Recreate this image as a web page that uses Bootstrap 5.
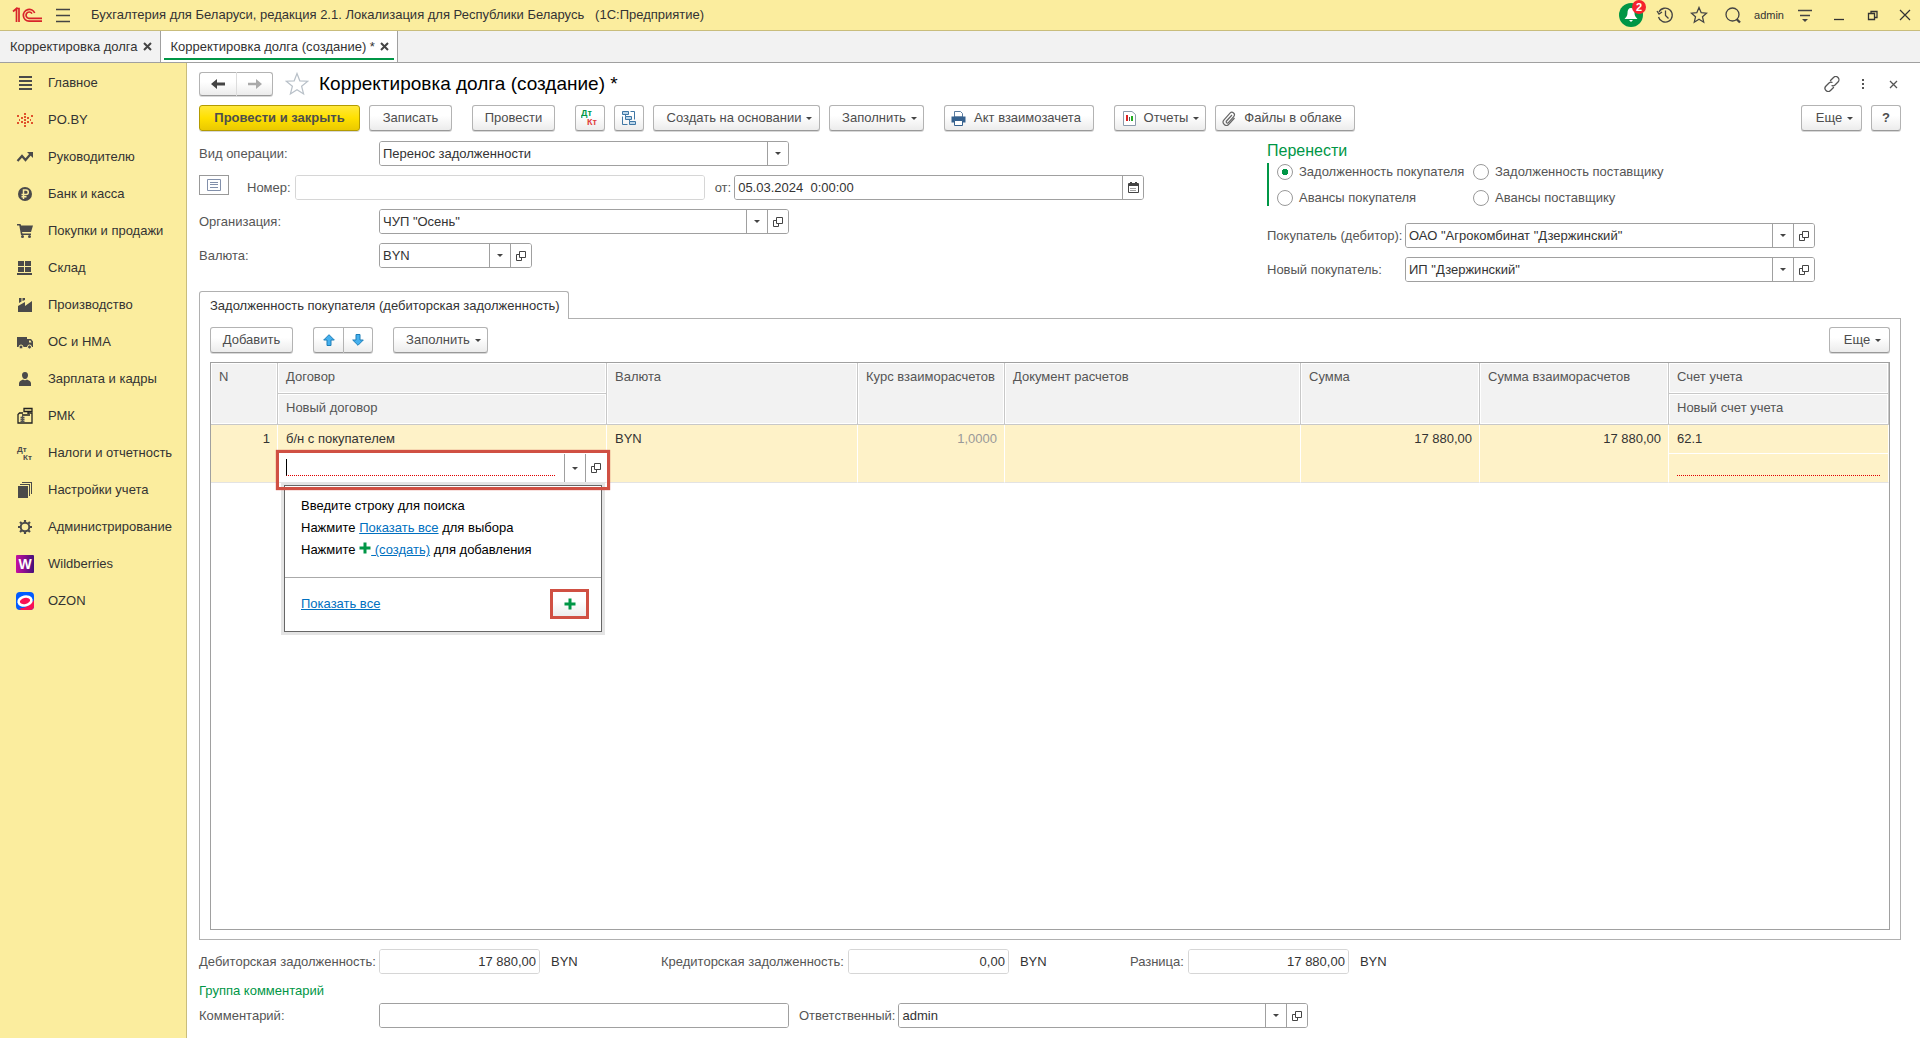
<!DOCTYPE html>
<html lang="ru">
<head>
<meta charset="utf-8">
<meta name="viewport" content="width=device-width, initial-scale=1">
<title>Корректировка долга (создание)</title>
<link href="https://cdn.jsdelivr.net/npm/bootstrap@5.3.0/dist/css/bootstrap.min.css" rel="stylesheet">
<style>
:root{--ink:#4d4d4d;--line:#a0a0a0;--soft:#d6d6d6;--brand:#fbed9e;--green:#009646;--red:#d05043}
body{font:13px/16px "Liberation Sans",Arial,sans-serif;color:#333;background:#fff;min-height:100vh}
svg{display:block;flex:none}
a{color:#0070c0}
.topbar{background:var(--brand);height:31px;border-bottom:1px solid #c9bd7c;padding-left:12px}
.icon-btn{border:0;background:none;padding:0;color:#4a4a4a;display:flex;align-items:center;justify-content:center}
.top-tools .icon-btn{width:34px}
.top-tools .icon-btn:last-child{width:30px}
.top-tools .bell{position:relative;width:24px;height:24px;margin:0 5px;border-radius:50%;background:var(--green)}
.bell-count{position:absolute;top:-3px;right:-3px;width:14px;height:14px;border-radius:50%;background:#f5222d;color:#fff;font-size:11px;line-height:14px;font-weight:bold}
.user-name{font-size:11px;padding:0 4px}
.tabstrip{background:#f2f2f2;height:32px;border-bottom:1px solid var(--line)}
.doc-tab{padding:0 8px 0 10px;gap:5px;border-right:1px solid var(--line);color:#333}
.doc-tab.current{background:#fff;position:relative}
.doc-tab.current::after{content:"";position:absolute;left:3px;right:3px;bottom:2px;height:2px;background:var(--green)}
.doc-tab a{color:inherit;text-decoration:none}
.sidebar{width:187px;flex:none;background:var(--brand);border-right:1px solid #c9bd7c;padding-top:1px}
.side-link{display:flex;align-items:center;height:37px;gap:14px;padding-left:16px;color:#333;text-decoration:none}
.page{padding:9px 19px 10px 12px;min-width:0}
.page-title{font-size:19px;line-height:24px;color:#000;margin:0;font-weight:normal}
.star-btn{margin:0 10px 0 12px}
.tool{display:inline-flex;align-items:center;justify-content:center;height:26px;border:1px solid #b3b3b3;border-bottom-color:#999;border-radius:3px;background:linear-gradient(#fff 40%,#ececec);color:var(--ink);box-shadow:0 1px 0 #d8d8d8;padding:0;font-size:13px;line-height:16px;white-space:nowrap;flex:none}
.tool.main{background:linear-gradient(#ffe83b,#ffe000 50%,#eac900);border-color:#b39b00;font-weight:bold;width:161px}
.w-sq{width:30px}.w-s{width:83px}.w-more{width:61px;padding-left:6px}.w-fill{width:95px;padding-left:6px}
.w-base{width:167px;padding-left:6px}.w-act{width:150px;padding-right:6px}.w-rep{width:92px;padding-left:2px}.w-file{width:140px;padding-right:6px}
.tool .caret{margin-left:5px}
.tool .pic{margin-right:8px}
.caret{width:0;height:0;border:3px solid transparent;border-top:3px solid #444;border-bottom:0}
.pair{display:inline-flex}
.pair .tool:first-child{border-radius:3px 0 0 3px;border-right:0}
.pair .tool:last-child{border-radius:0 3px 3px 0}
.pair .tool{width:30px}
.pair.history .tool{width:37px;height:24px}
.pair.history .tool:last-child{border-left-color:#ddd}
.tools-row{gap:9px}
.ms-g{margin-left:11px}
.top-row{margin-top:9px}
.form-area{display:grid;grid-template-columns:minmax(0,1068fr) minmax(0,634fr);margin-top:10px}
.cap{color:#555;white-space:nowrap}
.cap-a{width:180px}.cap-b{width:138px}
.cap-num{padding:0 4px 0 18px}
.cap-mid{padding:0 3px 0 10px}
.line-row{display:flex;align-items:center;height:25px}
.lines{display:flex;flex-direction:column;gap:9px}
.field{width:410px;height:25px;flex:none;flex-wrap:nowrap;border:1px solid var(--line);border-radius:3px;background:#fff;overflow:hidden}
.field .form-control,.field .form-select{border:0;border-radius:0;padding:0 3px;font-size:13px;line-height:16px;min-height:0;height:23px;color:#333;background-color:#fff;box-shadow:none}
.field .form-select{background-image:linear-gradient(var(--line),var(--line)),url("data:image/svg+xml,%3Csvg xmlns='http://www.w3.org/2000/svg' width='6' height='3'%3E%3Cpath d='M0 0h6L3 3z' fill='%23444'/%3E%3C/svg%3E");background-repeat:no-repeat;background-size:1px 23px,6px 3px;background-position:right 20px top,right 7px center}
.field .end{width:21px;margin-left:0!important;border:0;border-left:1px solid var(--line);background:#fff;padding:0;display:flex;align-items:center;justify-content:center;color:#444;flex:none}
.field.small-f{width:153px}
.field.sum{width:161px}
.field.mute{border-color:var(--soft)}
.field.sum input{text-align:right}
.note-btn{width:30px;height:20px;border:1px solid #999;background:#fff;padding:0;display:flex;align-items:center;justify-content:center;align-self:flex-start}
.move-title{font-size:16px;line-height:20px;color:var(--green);margin:0}
.radio-box{border-left:2px solid var(--green);display:grid;grid-template-columns:196px max-content;padding-left:8px;height:43px;align-content:space-between;margin:2px 0 17px}
.radio-box .form-check{display:flex;align-items:center;gap:6px;padding:0;margin:0;min-height:0;color:#555;height:17px}
.radio-box .form-check-input{width:16px;height:16px;margin:0;float:none;border-color:#999;box-shadow:none;flex:none}
.radio-box .form-check-input:checked{background-color:#fff;background-image:radial-gradient(circle,var(--green) 0 3px,transparent 3px)}
.panel-wrap{margin-top:9px}
.panel-tab{align-self:flex-start;height:28px;padding:0 8px 0 10px;border:1px solid #b0b0b0;border-bottom:0;border-radius:3px 3px 0 0;background:#fff;margin-bottom:-1px;position:relative;z-index:1;color:#333}
.panel-body{border:1px solid #b0b0b0;padding:8px 10px 9px}
.grid-box{border:1px solid var(--line);margin-top:9px;flex:1 1 auto}
.debts{table-layout:fixed;width:100%;border-collapse:separate;border-spacing:0}
.debts th{font-weight:normal;background:#f2f2f2;color:#555;height:31px;padding:6px 8px;vertical-align:top;border-right:1px solid #c8c8c8;border-bottom:1px solid #c8c8c8;box-shadow:inset 1px 1px #fff,inset -1px -1px #fff;white-space:nowrap}
.debts td{background:#fef2c8;height:29px;padding:6px 8px;vertical-align:top;border-right:1px solid #fff;border-bottom:1px solid #fff;color:#333;white-space:nowrap}
.debts td.text-end{padding-right:7px}
.debts td.dim{color:#999}
.debts .end-line{border-bottom-color:#e3e3e3}
.debts .edit-cell{padding:0;position:relative;background:#fff}
.dots{border-bottom:1px dotted #e00000;height:16px}
.edit-line{height:28px;display:flex}
.edit-line input{border:0;outline:0;flex:1 1 auto;min-width:0;margin:5px 9px 5px 8px;padding:0;height:17px;background:#fff;border-bottom:1px dotted #e00000;border-left:1px solid #000;border-radius:0}
.edit-line button{width:21px;border:0;border-left:1px solid var(--line);background:none;padding:0;display:flex;align-items:center;justify-content:center;color:#444}
.mark-frame{position:absolute;left:-2px;right:-4px;top:-4px;height:40px;border:3px solid var(--red);box-shadow:0 0 1px var(--red);z-index:3;pointer-events:none}
.hint{position:absolute;left:6px;top:31px;width:318px;border:1px solid #666;background:#fff;box-shadow:0 0 0 3px #e4e4e4;z-index:2;color:#000;white-space:nowrap}
.hint-text{padding:9px 16px 15px;line-height:22px;height:91px}
.hint-text svg{display:inline-block;vertical-align:0}
.hint-foot{border-top:1px solid #aaa;height:54px;padding:0 12px 2px 16px}
.plus-btn{width:39px;height:30px;border:3px solid var(--red);background:linear-gradient(#fff 40%,#ececec);padding:0;display:flex;align-items:center;justify-content:center}
.totals{margin-top:9px}
.totals .cur{width:121px;padding-left:11px;flex:none}
.group-cap{color:var(--green);margin:9px 0 4px;line-height:16px;font-size:13px;font-weight:normal}
</style>
</head>
<body class="d-flex flex-column">
<svg width="0" height="0" class="position-absolute" aria-hidden="true">
  <symbol id="open" viewBox="0 0 12 12"><path d="M4.500 1.500h6v6h-6zM4.500 4.500h-3v6h5v-3" fill="none" stroke="currentColor" stroke-width="1"/></symbol>
  <symbol id="plus" viewBox="0 0 12 12"><path d="M4.500 0.500h3v4H11.500v3H7.500V11.500h-3V7.500H.5v-3h4z" fill="#009646"/></symbol>
</svg>

<header class="topbar d-flex align-items-center">
  <svg width="31" height="16" viewBox="0 0 31 16" fill="none" stroke="#d8232a" stroke-width="1.700" aria-label="1С"><path d="M1 4.500L4.500 1.500V15M7 15V1.500H5"/><path d="M22.700 6A5.900 5.900 0 1 0 17 14.200H30M20 6.600A3.200 3.200 0 1 0 17 11.400H30"/></svg>
  <button class="icon-btn ms-2" aria-label="Меню"><svg width="24" height="16" viewBox="0 0 24 16" stroke="#444" stroke-width="1.300"><path d="M5 2.500h14M5 8.500h14M5 14.500h14"/></svg></button>
  <span class="ms-3">Бухгалтерия для Беларуси, редакция 2.1. Локализация для Республики Беларусь &nbsp; (1С:Предприятие)</span>
  <div class="top-tools ms-auto d-flex align-items-center">
    <button class="icon-btn bell" aria-label="Оповещения"><svg width="16" height="16" viewBox="0 0 16 16" fill="#fff"><path d="M8 1c-2.500 0-3.500 2-3.500 5C4.500 9 3 10 1.500 12h13C13 10 11.500 9 11.500 6c0-3-1-5-3.500-5zM6 13h4l-2 2z"/></svg><span class="bell-count">2</span></button>
    <button class="icon-btn" aria-label="История"><svg width="18" height="18" viewBox="0 0 18 18" fill="none" stroke="#444" stroke-width="1.300"><path d="M3 6a7 7 0 1 1-.5 5M9.500 4.500V9.500l3 3"/><path d="M1 5l2 3 3-2"/></svg></button>
    <button class="icon-btn" aria-label="Избранное"><svg width="18" height="18" viewBox="0 0 18 18" fill="none" stroke="#444" stroke-width="1.300"><path d="M9 1.500l2.200 5.200 5.300.5-4 3.600 1.200 5.400L9 13.300l-4.700 2.900 1.200-5.400-4-3.600 5.300-.5z"/></svg></button>
    <button class="icon-btn" aria-label="Поиск"><svg width="18" height="18" viewBox="0 0 18 18" fill="none" stroke="#444" stroke-width="1.300"><circle cx="8.500" cy="8.500" r="6.500"/><path d="M12.500 13l3.500 3.500" stroke-width="2.300"/></svg></button>
    <span class="user-name">admin</span>
    <button class="icon-btn" aria-label="Сервис"><svg width="16" height="16" viewBox="0 0 16 16" stroke="#444" stroke-width="1.300"><path d="M1 3.500h14M3 8.500h10"/><path d="M5 12h6l-3 3z" fill="#444" stroke="none"/></svg></button>
    <button class="icon-btn" aria-label="Свернуть"><svg width="18" height="16" viewBox="0 0 18 16" stroke="#333" stroke-width="1.300"><path d="M4 12.500h10"/></svg></button>
    <button class="icon-btn" aria-label="Восстановить"><svg width="18" height="16" viewBox="0 0 18 16" fill="none" stroke="#333" stroke-width="1.300"><path d="M4.500 6.500h6v6h-6zM7 6V4.500h6v6h-2"/></svg></button>
    <button class="icon-btn" aria-label="Закрыть"><svg width="16" height="16" viewBox="0 0 16 16" stroke="#333" stroke-width="1.200"><path d="M3 3l10 10M13 3L3 13"/></svg></button>
  </div>
</header>

<nav class="tabstrip d-flex align-items-stretch">
  <div class="doc-tab d-flex align-items-center"><a href="#">Корректировка долга</a><button class="icon-btn" aria-label="Закрыть вкладку"><svg width="9" height="9" viewBox="0 0 9 9" stroke="#444" stroke-width="2"><path d="M1 1l7 7M8 1L1 8"/></svg></button></div>
  <div class="doc-tab current d-flex align-items-center"><a href="#">Корректировка долга (создание) *</a><button class="icon-btn" aria-label="Закрыть вкладку"><svg width="9" height="9" viewBox="0 0 9 9" stroke="#444" stroke-width="2"><path d="M1 1l7 7M8 1L1 8"/></svg></button></div>
</nav>

<div class="d-flex flex-grow-1">
<nav class="sidebar">
  <a class="side-link" href="#"><svg width="18" height="18" viewBox="0 0 18 18" fill="#4a4a4a"><path d="M3 2h13v2H3zM3 6h13v2H3zM3 10h13v2H3zM3 14h13v2H3z"/></svg>Главное</a>
  <a class="side-link" href="#"><svg width="18" height="18" viewBox="0 0 18 18" fill="#e0532d"><path d="M8 2h2v2H8zM8 5h2v2H8zM8 8h2v2H8zM8 11h2v2H8zM8 14h2v2H8zM5 6h2v2H5zM11 6h2v2h-2zM5 10h2v2H5zM11 10h2v2h-2zM1 4h2v2H1zM15 4h2v2h-2zM3 8h1v2H3zM14 8h1v2h-1zM1 11h2v2H1zM15 11h2v2h-2z"/></svg>PO.BY</a>
  <a class="side-link" href="#"><svg width="18" height="18" viewBox="0 0 18 18" fill="none" stroke="#4a4a4a" stroke-width="2.200"><path d="M1.500 13l4.500-5 3.500 4L15 5.500"/><path d="M11 4h6v6z" fill="#4a4a4a" stroke="none"/></svg>Руководителю</a>
  <a class="side-link" href="#"><svg width="18" height="18" viewBox="0 0 18 18"><circle cx="9" cy="9" r="7" fill="#4a4a4a"/><path d="M7.500 14V5H10a2.300 2.300 0 0 1 0 4.600H5.500M5.500 11.800h5" fill="none" stroke="#fbed9e" stroke-width="1.500"/></svg>Банк и касса</a>
  <a class="side-link" href="#"><svg width="18" height="18" viewBox="0 0 18 18" fill="#4a4a4a"><path d="M1 2h3.500l.6 1.500H17L15 10H6l.5 1.500H15V13H5L3.300 3.500H1z"/><circle cx="6.500" cy="14.500" r="1.500"/><circle cx="13.500" cy="14.500" r="1.500"/></svg>Покупки и продажи</a>
  <a class="side-link" href="#"><svg width="18" height="18" viewBox="0 0 18 18" fill="#4a4a4a"><path d="M2 2h6v5H2zM9 2h6v5H9zM2 8h6v5H2zM9 8h6v5H9zM1 14h15v2H1z"/></svg>Склад</a>
  <a class="side-link" href="#"><svg width="18" height="18" viewBox="0 0 18 18" fill="#4a4a4a"><path d="M2 16v-6l7-4v4l7-5v11zM3 2h2.500v3.500L3 7zM6.500 2H9v2L6.500 5z"/></svg>Производство</a>
  <a class="side-link" href="#"><svg width="18" height="18" viewBox="0 0 18 18" fill="#4a4a4a"><path d="M1 4h10v10H1zM11 6h4l2 2.500V14h-6z"/><path d="M13 7.500h1.500l1 2H13z" fill="#fbed9e"/><g stroke="#fbed9e"><circle cx="5" cy="14" r="2"/><circle cx="13.500" cy="14" r="2"/></g></svg>ОС и НМА</a>
  <a class="side-link" href="#"><svg width="18" height="18" viewBox="0 0 18 18" fill="#4a4a4a"><path d="M9 2c2.200 0 3 1.500 3 3.200C12 7 11 9 9 9S6 7 6 5.200C6 3.500 6.800 2 9 2zM3 16v-2.500C3 11 5 10.500 7 9.500c1 1 3 1 4 0 2 1 4 1.500 4 4V16z"/></svg>Зарплата и кадры</a>
  <a class="side-link" href="#"><svg width="18" height="18" viewBox="0 0 18 18" fill="none" stroke="#222" stroke-width="1.300"><path d="M7 6H3.500L2 7.500V16h14V6h-4"/><path d="M8 1.500h8v3H8zM12 4.500V7M6 8h8"/><path d="M4.500 10.500h4M4.500 12.500h4M4.500 14.500h4M6.500 9v6" stroke="#555"/></svg>РМК</a>
  <a class="side-link" href="#"><svg width="18" height="18" viewBox="0 0 18 18" fill="#4a4a4a" font-family="Liberation Sans" font-weight="bold" font-size="8"><text x="1" y="8">Дт</text><text x="7" y="16">Кт</text></svg>Налоги и отчетность</a>
  <a class="side-link" href="#"><svg width="18" height="18" viewBox="0 0 18 18" fill="#4a4a4a"><path d="M2 5h10v12H2zM4 3h10v12h-1V4H4zM6 1h10v12h-1V2H6z"/></svg>Настройки учета</a>
  <a class="side-link" href="#"><svg width="18" height="18" viewBox="0 0 18 18" fill="none" stroke="#4a4a4a"><circle cx="9" cy="9" r="4.300" stroke-width="2"/><path d="M9 2v2.500M9 13.500V16M2 9h2.500M13.500 9H16M4 4l1.800 1.800M12.200 12.200L14 14M4 14l1.800-1.800M12.200 5.800L14 4" stroke-width="2.200"/></svg>Администрирование</a>
  <a class="side-link" href="#"><svg width="18" height="18" viewBox="0 0 18 18"><defs><linearGradient id="wb"><stop stop-color="#c70fa0"/><stop offset="1" stop-color="#45107a"/></linearGradient></defs><rect width="18" height="18" rx="1" fill="url(#wb)"/><text x="9" y="14" text-anchor="middle" fill="#fff" font-family="Liberation Sans" font-weight="bold" font-size="14">W</text></svg>Wildberries</a>
  <a class="side-link" href="#"><svg width="18" height="18" viewBox="0 0 18 18"><rect width="18" height="18" rx="4" fill="#005bff"/><path d="M3 16c5 1 10-2 15-8v6a4 4 0 0 1-4 4H5z" fill="#f91155"/><ellipse cx="9" cy="9" rx="6.500" ry="4.300" transform="rotate(-12 9 9)" fill="#f91155" stroke="#fff" stroke-width="2.600"/></svg>OZON</a>
</nav>

<main class="page flex-grow-1 d-flex flex-column">
  <div class="d-flex align-items-center">
    <div class="pair history"><button class="tool" aria-label="Назад"><svg width="14" height="12" viewBox="0 0 14 12"><path d="M0 6l6-5v3.500h8v3H6V11z" fill="#444"/></svg></button><button class="tool" aria-label="Вперед"><svg width="14" height="12" viewBox="0 0 14 12"><path d="M14 6L8 1v3.800H0v2.400h8V11z" fill="#aaa"/></svg></button></div>
    <button class="icon-btn star-btn" aria-label="В избранное"><svg width="24" height="24" viewBox="0 0 24 24" fill="#fff" stroke="#b8c0c8" stroke-width="1.200"><path d="M12 1.500l2.800 7.300 8 .4-6.200 5 2 7.800-6.600-4.300L5.400 22l2-7.800-6.200-5 8-.4z"/></svg></button>
    <h1 class="page-title">Корректировка долга (создание) *</h1>
    <div class="ms-auto d-flex align-items-center gap-3">
      <button class="icon-btn" aria-label="Ссылка"><svg width="16" height="16" viewBox="0 0 16 16" fill="none" stroke="#555" stroke-width="1.300" stroke-linecap="round"><path d="M6.500 4.500l3-3a3 3 0 0 1 4.500 4.500l-3 3a3 3 0 0 1-3 .6M9.500 11.500l-3 3A3 3 0 0 1 2 10l3-3a3 3 0 0 1 3-.6"/></svg></button>
      <button class="icon-btn" aria-label="Меню формы"><svg width="14" height="16" viewBox="0 0 14 16" fill="#555"><path d="M6 3h2v2H6zM6 7h2v2H6zM6 11h2v2H6z"/></svg></button>
      <button class="icon-btn" aria-label="Закрыть форму"><svg width="15" height="15" viewBox="0 0 15 15" stroke="#555" stroke-width="1.300"><path d="M4 4l7 7M11 4l-7 7"/></svg></button>
    </div>
  </div>

  <div class="d-flex align-items-center tools-row top-row">
    <button class="tool main">Провести и закрыть</button>
    <button class="tool w-s">Записать</button>
    <button class="tool w-s ms-g">Провести</button>
    <button class="tool w-sq ms-g" aria-label="Проводки"><svg width="18" height="18" viewBox="0 0 18 18" font-family="Liberation Sans" font-weight="bold" font-size="9"><text x="0" y="7" fill="#009646">Дт</text><text x="6" y="16" fill="#e03c3c">Кт</text></svg></button>
    <button class="tool w-sq" aria-label="Структура подчиненности"><svg width="16" height="16" viewBox="0 0 16 16" fill="#bcd6ea" stroke="#3f77a5"><path d="M1.500 1.500h6v3h-6zM4.500 6.500h6v3h-6zM8.500 11.500h6v3h-6z"/><path d="M9.500 1.500h4v8M4.500 4.500v2M1.500 6.500v8h5M8.500 9.500v2" fill="none"/></svg></button>
    <button class="tool w-base">Создать на основании<span class="caret"></span></button>
    <button class="tool w-fill">Заполнить<span class="caret"></span></button>
    <button class="tool w-act ms-g"><svg class="pic" width="15" height="15" viewBox="0 0 15 15"><path d="M3.500.5h6l2 2V6h-8z" fill="#fff" stroke="#5b7da0"/><path d="M.5 5.500h14v6H.5z" fill="#35618e"/><path d="M3.500 9.500h8v5h-8z" fill="#fff" stroke="#35618e"/></svg>Акт взаимозачета</button>
    <button class="tool w-rep ms-g"><svg class="pic" width="13" height="15" viewBox="0 0 13 15"><path d="M.5.5H9l3.500 3v11H.5z" fill="#fff" stroke="#8c9bab"/><path d="M3 4h2v6H3z" fill="#d22"/><path d="M6 6h1v4H6z" fill="#555"/><path d="M8 5h2v5H8z" fill="#2a2"/></svg>Отчеты<span class="caret"></span></button>
    <button class="tool w-file"><svg class="pic" width="14" height="15" viewBox="0 0 14 15" fill="none" stroke="#666" stroke-width="1.200"><path d="M10 4l-5.500 6a1.200 1.200 0 0 0 1.900 1.600l5.300-6A2.500 2.500 0 0 0 8 2.200L2 8.800a3.300 3.300 0 0 0 5 4.400L12.500 7"/></svg>Файлы в облаке</button>
    <div class="ms-auto d-flex tools-row"><button class="tool w-more">Еще<span class="caret"></span></button><button class="tool w-sq fw-bold">?</button></div>
  </div>

  <div class="form-area">
    <div class="lines">
      <div class="line-row"><label class="cap cap-a" for="op">Вид операции:</label><div class="input-group field"><select id="op" class="form-select"><option>Перенос задолженности</option></select></div></div>
      <div class="line-row"><button class="note-btn" aria-label="Комментарий"><svg width="14" height="12" viewBox="0 0 14 12" fill="none" stroke="#8290ab"><path d="M.5.500h13v11H.5zM3 3.500h8M3 5.500h8M3 8.500h8"/></svg></button><label class="cap cap-num" for="num">Номер:</label><div class="input-group field mute"><input id="num" class="form-control"></div><label class="cap cap-mid" for="dt">от:</label><div class="input-group field"><input id="dt" class="form-control" value="05.03.2024  0:00:00"><button class="end" aria-label="Календарь"><svg width="11" height="11" viewBox="0 0 11 11"><path d="M.5 1.500h10v9H.5z" fill="#fff" stroke="#444"/><path d="M1 1h9v3H1zM2 0h2v2H2zM7 0h2v2H7z" fill="#444"/><path d="M2.500 6.500h6M2.500 8.500h6" stroke="#444" stroke-dasharray="1"/></svg></button></div></div>
      <div class="line-row"><label class="cap cap-a" for="org">Организация:</label><div class="input-group field"><input id="org" class="form-control" value='ЧУП "Осень"'><button class="end" aria-label="Выбрать"><span class="caret"></span></button><button class="end" aria-label="Открыть"><svg width="12" height="12"><use href="#open"/></svg></button></div></div>
      <div class="line-row"><label class="cap cap-a" for="val">Валюта:</label><div class="input-group field small-f"><input id="val" class="form-control" value="BYN"><button class="end" aria-label="Выбрать"><span class="caret"></span></button><button class="end" aria-label="Открыть"><svg width="12" height="12"><use href="#open"/></svg></button></div></div>
    </div>
    <div>
      <h2 class="move-title">Перенести</h2>
      <div class="radio-box">
        <div class="form-check"><input class="form-check-input" type="radio" name="mv" id="m1" checked><label for="m1">Задолженность покупателя</label></div>
        <div class="form-check"><input class="form-check-input" type="radio" name="mv" id="m2"><label for="m2">Задолженность поставщику</label></div>
        <div class="form-check"><input class="form-check-input" type="radio" name="mv" id="m3"><label for="m3">Авансы покупателя</label></div>
        <div class="form-check"><input class="form-check-input" type="radio" name="mv" id="m4"><label for="m4">Авансы поставщику</label></div>
      </div>
      <div class="lines">
        <div class="line-row"><label class="cap cap-b" for="buy">Покупатель (дебитор):</label><div class="input-group field"><input id="buy" class="form-control" value='ОАО "Агрокомбинат "Дзержинский"'><button class="end" aria-label="Выбрать"><span class="caret"></span></button><button class="end" aria-label="Открыть"><svg width="12" height="12"><use href="#open"/></svg></button></div></div>
        <div class="line-row"><label class="cap cap-b" for="nbuy">Новый покупатель:</label><div class="input-group field"><input id="nbuy" class="form-control" value='ИП "Дзержинский"'><button class="end" aria-label="Выбрать"><span class="caret"></span></button><button class="end" aria-label="Открыть"><svg width="12" height="12"><use href="#open"/></svg></button></div></div>
      </div>
    </div>
  </div>

  <div class="panel-wrap d-flex flex-column flex-grow-1">
    <button class="panel-tab">Задолженность покупателя (дебиторская задолженность)</button>
    <section class="panel-body d-flex flex-column flex-grow-1">
      <div class="d-flex tools-row">
        <button class="tool w-s">Добавить</button>
        <div class="pair ms-g"><button class="tool" aria-label="Вверх"><svg width="12" height="12" viewBox="0 0 12 12"><path d="M6 .7L11.300 6H8v5.500H4V6H.7z" fill="#45b0ee" stroke="#1f7fb8"/></svg></button><button class="tool" aria-label="Вниз"><svg width="12" height="12" viewBox="0 0 12 12"><path d="M6 11.300L.7 6H4V.5h4V6h3.300z" fill="#45b0ee" stroke="#1f7fb8"/></svg></button></div>
        <button class="tool w-fill ms-g">Заполнить<span class="caret"></span></button>
        <button class="tool w-more ms-auto">Еще<span class="caret"></span></button>
      </div>
      <div class="grid-box">
        <table class="debts">
          <colgroup><col style="width:67px"><col style="width:329px"><col style="width:251px"><col style="width:147px"><col style="width:296px"><col style="width:179px"><col style="width:189px"><col style="width:220px"></colgroup>
          <thead>
            <tr><th rowspan="2">N</th><th>Договор</th><th rowspan="2">Валюта</th><th rowspan="2">Курс взаиморасчетов</th><th rowspan="2">Документ расчетов</th><th rowspan="2">Сумма</th><th rowspan="2">Сумма взаиморасчетов</th><th>Счет учета</th></tr>
            <tr><th>Новый договор</th><th>Новый счет учета</th></tr>
          </thead>
          <tbody>
            <tr><td rowspan="2" class="text-end end-line">1</td><td>б/н с покупателем</td><td rowspan="2" class="end-line">BYN</td><td rowspan="2" class="text-end end-line dim">1,0000</td><td rowspan="2" class="end-line"></td><td rowspan="2" class="text-end end-line">17 880,00</td><td rowspan="2" class="text-end end-line">17 880,00</td><td>62.1</td></tr>
            <tr><td class="edit-cell end-line">
              <div class="edit-line"><input aria-label="Новый договор"><button aria-label="Выбрать"><span class="caret"></span></button><button aria-label="Открыть"><svg width="12" height="12"><use href="#open"/></svg></button></div>
              <div class="mark-frame"></div>
              <div class="hint">
                <div class="hint-text">Введите строку для поиска<br>Нажмите <a href="#">Показать все</a> для выбора<br>Нажмите <svg width="12" height="12"><use href="#plus"/></svg><a href="#">&nbsp;(создать)</a> для добавления</div>
                <div class="hint-foot d-flex align-items-center justify-content-between"><a href="#">Показать все</a><button class="plus-btn" aria-label="Создать"><svg width="12" height="12"><use href="#plus"/></svg></button></div>
              </div>
            </td><td class="end-line"><div class="dots"></div></td></tr>
          </tbody>
        </table>
      </div>
    </section>
  </div>

  <div class="totals d-flex align-items-center">
    <label class="cap cap-a" for="t1">Дебиторская задолженность:</label><div class="input-group field sum mute"><input id="t1" class="form-control" readonly value="17 880,00"></div><span class="cur">BYN</span>
    <label class="cap pe-1" for="t2">Кредиторская задолженность:</label><div class="input-group field sum mute"><input id="t2" class="form-control" readonly value="0,00"></div><span class="cur">BYN</span>
    <label class="cap pe-1" for="t3">Разница:</label><div class="input-group field sum mute"><input id="t3" class="form-control" readonly value="17 880,00"></div><span class="cur">BYN</span>
  </div>
  <h2 class="group-cap">Группа комментарий</h2>
  <div class="line-row"><label class="cap cap-a" for="cm">Комментарий:</label><div class="input-group field"><input id="cm" class="form-control"></div><label class="cap cap-mid" for="rs">Ответственный:</label><div class="input-group field"><input id="rs" class="form-control" value="admin"><button class="end" aria-label="Выбрать"><span class="caret"></span></button><button class="end" aria-label="Открыть"><svg width="12" height="12"><use href="#open"/></svg></button></div></div>
</main>
</div>
<script src="https://cdn.jsdelivr.net/npm/bootstrap@5.3.0/dist/js/bootstrap.bundle.min.js"></script>
</body>
</html>
